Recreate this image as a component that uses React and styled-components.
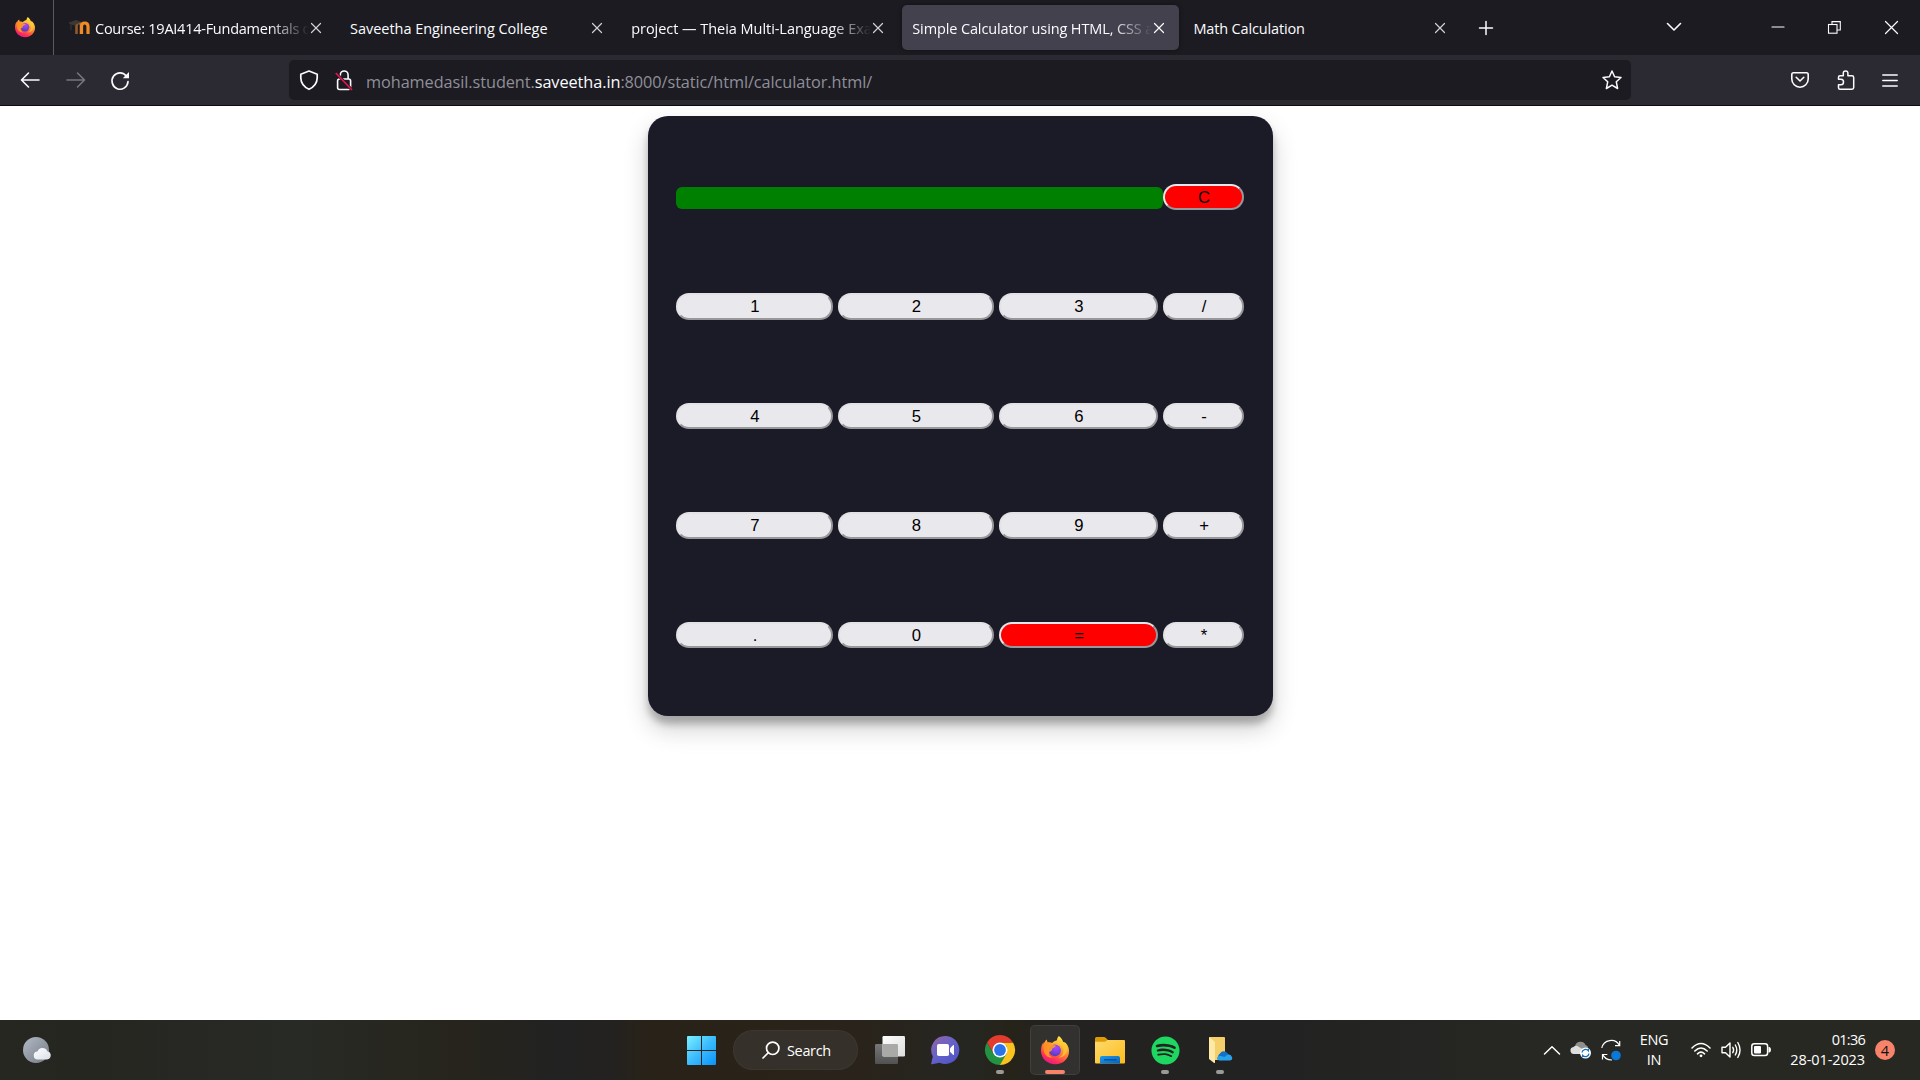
import React from "react";
import styled, { createGlobalStyle } from "styled-components";
import { FaSpotify } from "react-icons/fa";

const GlobalStyle = createGlobalStyle`
  * { box-sizing: border-box; }
  body { margin: 0; background: #fff; overflow: hidden; }
  svg { display: block; flex: none; overflow: visible; }
`;

const Screen = styled.div`
  display: grid;
  grid-template-rows: 55px 51px 914px 60px;
  width: 1920px;
  height: 1080px;
  font-family: "Open Sans", "Noto Sans", sans-serif;
  color: #fbfbfe;
`;

/* ---------- Browser chrome ---------- */

const TabStrip = styled.header`
  display: flex;
  align-items: center;
  background: #1c1b22;
`;

const PinnedSlot = styled.div`
  display: flex;
  align-items: center;
  justify-content: center;
  width: 54px;
  height: 55px;
  padding: 0 3px 1px 0;
  border-right: 1px solid #5b5a62;
`;

const Tabs = styled.nav`
  display: grid;
  grid-template-columns: repeat(5, 277px);
  column-gap: 4.1px;
  margin-left: 5px;
`;

const Tab = styled.div`
  display: flex;
  align-items: center;
  height: 45px;
  padding: 0 15px 0 10px;
  border-radius: 5px;
  background: ${(p) => (p.$active ? "#42414d" : "transparent")};
  box-shadow: ${(p) => (p.$active ? "0 0 4px rgba(0, 0, 0, 0.45)" : "none")};
`;

const TabTitle = styled.span`
  flex: 1;
  min-width: 0;
  white-space: nowrap;
  font-size: 14.5px;
  line-height: 24px;
  padding-top: 2px;
  letter-spacing: ${(p) => p.$tracking || -0.04}px;
  mask-image: ${(p) => (p.$fade ? "linear-gradient(to left, transparent 2px, #000 42px)" : "none")};
`;

const Favicon = styled.span`
  display: flex;
  margin-right: 5px;
`;

const NewTab = styled.span`
  display: flex;
  margin-left: 19px;
`;

const WindowControls = styled.div`
  display: flex;
  align-items: center;
  gap: 44px;
  margin-left: auto;
  padding: 0 22px 1px 0;
`;

const ListTabs = styled.span`
  display: flex;
  margin-right: 47px;
`;

const NavBar = styled.div`
  display: flex;
  align-items: center;
  background: #2b2a33;
  border-bottom: 1px solid #0c0c0d;
`;

const NavButtons = styled.div`
  display: flex;
  align-items: center;
  gap: 25.5px;
  width: 289px;
  padding-left: 20px;
`;

const UrlBar = styled.div`
  display: flex;
  align-items: center;
  width: 1342px;
  height: 40px;
  padding: 0 9px 0 10px;
  border-radius: 5px;
  background: #1c1b22;
`;

const UrlIcons = styled.div`
  display: flex;
  gap: 16px;
  margin-right: 13px;
`;

const Address = styled.span`
  flex: 1;
  padding-top: 3px;
  font-size: 16.3px;
  line-height: 26px;
  letter-spacing: -0.07px;
  color: #8f8f98;
`;

const Host = styled.span`
  color: #fbfbfe;
`;

const ToolbarActions = styled.div`
  display: flex;
  align-items: center;
  gap: 27.5px;
  margin-left: auto;
  padding-right: 22px;
`;

/* ---------- Calculator page ---------- */

const Page = styled.main`
  display: flex;
  justify-content: center;
  align-items: flex-start;
  padding-top: 10px;
  background: #fff;
`;

const Calculator = styled.section`
  display: grid;
  grid-template-columns: 157px 156px 159px 81px;
  grid-template-rows: repeat(5, 109.5px);
  column-gap: 5px;
  align-items: center;
  width: 625px;
  height: 600px;
  padding: 26px 28px;
  border-radius: 20px;
  background: #1a1b27;
  box-shadow: 0 12.5px 25px rgba(0, 0, 0, 0.19), 0 7.5px 7.5px rgba(0, 0, 0, 0.23);
`;

const Display = styled.div`
  grid-column: span 3;
  height: 22px;
  margin: 2px -5px 0 0;
  border-radius: 6px;
  background: #008000;
`;

const Key = styled.button`
  height: ${(p) => (p.$tall ? 27 : 26)}px;
  width: 100%;
  padding: 2px 0 0 2px;
  border: 2px solid;
  border-color: ${(p) => (p.$accent ? "#e9e9ed #98989c #98989c #e9e9ed" : "#e3e3e5 #98989a #98989a #e3e3e5")};
  border-radius: 13px;
  background: ${(p) => (p.$accent ? "#ff0000" : "#e9e9ed")};
  color: #000;
  font: 16.7px/20px "Liberation Sans", Arial, sans-serif;
`;

/* ---------- Taskbar ---------- */

const Taskbar = styled.footer`
  display: grid;
  grid-template-columns: 676px 569px 1fr;
  align-items: center;
  background: linear-gradient(
    90deg,
    #272722 0,
    #262621 90px,
    #282a25 300px,
    #27261f 410px,
    #26241c 460px,
    #222222 560px,
    #232220 610px,
    #292218 650px,
    #29231b 860px,
    #252621 970px,
    #262319 1010px,
    #232220 1050px,
    #222222 1280px,
    #272723 1540px,
    #282823 1920px
  );
`;

const Weather = styled.div`
  padding-left: 22px;
`;

const Apps = styled.div`
  display: flex;
  align-items: center;
  gap: 5px;
`;

const AppSlot = styled.div`
  position: relative;
  display: flex;
  align-items: center;
  justify-content: center;
  width: 50px;
  height: 50px;
  border-radius: 5px;
  background: ${(p) => (p.$active ? "rgba(255, 255, 255, 0.07)" : "transparent")};
  box-shadow: ${(p) => (p.$active ? "inset 0 0 0 1px rgba(255, 255, 255, 0.07)" : "none")};
`;

const Indicator = styled.i`
  position: absolute;
  bottom: 1px;
  left: 50%;
  width: ${(p) => (p.$active ? 20 : 8)}px;
  height: 4px;
  border-radius: 2px;
  transform: translateX(-50%);
  background: ${(p) => (p.$active ? "#f7846a" : "#9a9a98")};
`;

const SearchPill = styled.div`
  display: flex;
  align-items: center;
  gap: 7px;
  width: 125px;
  height: 40px;
  margin: 0 2px;
  padding-left: 29px;
  border-radius: 20px;
  background: #353029;
  box-shadow: inset 0 0 0 1px #3b362f;
  font-size: 14.5px;
  letter-spacing: -0.35px;
  color: #fff;
`;

const Tray = styled.div`
  display: flex;
  align-items: center;
  justify-content: flex-end;
  padding-right: 25px;
  font-size: 14.5px;
  line-height: 20px;
  color: #fff;
`;

const TrayIcons = styled.div`
  display: flex;
  align-items: center;
  gap: 10px;
`;

const Language = styled.div`
  width: 30px;
  margin: 0 22px 0 18px;
  text-align: center;
  letter-spacing: -0.3px;
`;

const Clock = styled.div`
  width: 80px;
  margin: 0 10px 0 14px;
  text-align: right;
  letter-spacing: -0.1px;
`;

const Time = styled.div`
  letter-spacing: -0.75px;
`;

const Badge = styled.div`
  width: 20px;
  height: 20px;
  border-radius: 50%;
  background: #f7846a;
  color: #111;
  font-size: 14.5px;
  line-height: 21px;
  text-align: center;
`;

/* ---------- Icons ---------- */

const Line = ({ w, h, d, sw = 1.6, color = "#fbfbfe", fill = "none", children }) => (
  <svg width={w} height={h} viewBox={`0 0 ${w} ${h}`} fill={fill} stroke={color} strokeWidth={sw} strokeLinecap="round" strokeLinejoin="round">
    <path d={d} />
    {children}
  </svg>
);

const Close = ({ size = 10, color = "#d2d2d6" }) => (
  <Line w={size} h={size} sw={1.2} color={color} d={`M.5 .5L${size - 0.5} ${size - 0.5}M${size - 0.5} .5L.5 ${size - 0.5}`} />
);

const FirefoxIcon = ({ size, id }) => (
  <svg width={size} height={size} viewBox="0 0 28 28">
    <defs>
      <linearGradient id={`${id}-body`} x1=".8" y1="0" x2=".3" y2="1">
        <stop offset="0" stopColor="#fff44f" />
        <stop offset=".3" stopColor="#ffb932" />
        <stop offset=".58" stopColor="#ff7139" />
        <stop offset=".8" stopColor="#ff3355" />
        <stop offset="1" stopColor="#e31587" />
      </linearGradient>
      <radialGradient id={`${id}-globe`} cx=".6" cy=".25" r=".8">
        <stop offset="0" stopColor="#b044f5" />
        <stop offset=".55" stopColor="#7542e5" />
        <stop offset="1" stopColor="#4a3fa8" />
      </radialGradient>
      <linearGradient id={`${id}-head`} x1="0" y1="0" x2="1" y2="1">
        <stop offset="0" stopColor="#ff8a16" />
        <stop offset="1" stopColor="#ffb52e" />
      </linearGradient>
    </defs>
    <path fill={`url(#${id}-body)`} d="M17.8 0c2.4 1.5 3.6 3.7 4.4 6 1-.1 2.2.6 2.8 1.3 2 2.3 3 4.9 3 7.9C28 22.500 22.100 28.300 14.300 28.300 6.300 28.300 0 22.300 0 14.700c0-3.600 1-6.400 2.400-8.400L2.700 8.200C3.200 6.100 4.400 4.400 6 3.500c-.1 1.200.1 2.200.9 3 1.500-.3 3-.1 4.200.6 1.300-1.700 3.100-2.500 4.900-2.900C16 2.600 16.700 1.200 17.800 0Z" />
    <circle cx="14" cy="14.300" r="5.900" fill={`url(#${id}-globe)`} />
    <path fill={`url(#${id}-head)`} d="M2.600 8.800C4 6.800 6.500 6.100 8.800 6.900c1.100.4 1.800 1.200 2.500 2.200l3.600.3c0 1.600-2.500 2.300-3.400 3.200-.5.600-.2 1.500-1 2.100-.8.700-1.900.7-2.600 1.500-.5 2.700 1.500 4.600 4.200 5.200-4.600 1-8.800-2.200-9.300-6.600-.3-2.300-.4-4.200-.2-6Z" opacity=".85" />
    <path fill="#ffca35" opacity=".75" d="M17.500 7.200c3.800 2 5.600 5 4.900 8.700-.5 2.700-2.400 4.800-5 5.700 4.800.1 8.200-3.200 8.500-7.600.2-3.400-1.500-5.900-4.100-7.600L18 3.200c-.9 1.400-1 2.700-.5 4Z" />
  </svg>
);

const MoodleIcon = () => (
  <svg width="21" height="17" viewBox="0 0 21 17" fill="none">
    <path d="M7.500 15V7Q7.500 4 9.700 4T12 7V15" stroke="#8f5a2c" strokeWidth="2.600" />
    <path d="M12.500 15V7.500Q12.500 4 15.700 4T19 7.500V15" stroke="#f08a24" strokeWidth="3.200" />
    <path d="M0 4L7 1.500l4 1.500-6 3ZM2 5v6" stroke="#3c3836" fill="#3c3836" />
  </svg>
);

const ReloadIcon = () => (
  <svg width="18" height="19" viewBox="0 0 18 19" fill="none" stroke="#fbfbfe" strokeWidth="1.700">
    <path d="M15.500 5.200A8 8.200 0 1 0 17 10.500" strokeLinecap="round" />
    <path d="M18 1V7.200H11.800Z" fill="#fbfbfe" stroke="none" />
  </svg>
);

const LockIcon = () => (
  <svg width="18" height="21" viewBox="0 0 18 21" fill="none" stroke="#fbfbfe" strokeWidth="1.600">
    <rect x="2.600" y="9" width="13" height="10.500" rx="2" />
    <path d="M5.300 9V5a3.900 4 0 0 1 7.800 0V9" />
    <path d="M.8 2.800L17 20" stroke="#1c1b22" strokeWidth="3" />
    <path d="M.8 3L17 20" stroke="#e8134b" strokeWidth="1.800" />
  </svg>
);

const RestoreIcon = () => (
  <svg width="13" height="13" viewBox="0 0 13 13" fill="none" stroke="#fbfbfe" strokeWidth="1.100">
    <rect x=".5" y="3.500" width="8.500" height="8.700" />
    <path d="M4 3.500V.6H12.300V9H9" />
  </svg>
);

const WeatherIcon = () => (
  <svg width="29" height="28" viewBox="0 0 29 28">
    <defs>
      <linearGradient id="moon" x1="0" y1="0" x2="1" y2="1"><stop stopColor="#b2bac5" /><stop offset="1" stopColor="#747b85" /></linearGradient>
      <linearGradient id="cloud" x1="0" y1="0" x2="1" y2="1"><stop stopColor="#fff" /><stop offset="1" stopColor="#d9e0e8" /></linearGradient>
    </defs>
    <circle cx="14" cy="14" r="13" fill="url(#moon)" />
    <path fill="url(#cloud)" d="M16 23.500a4 4 0 0 1-.5-8 5.200 5.200 0 0 1 9.800-.3A4.200 4.200 0 0 1 25 23.500Z" />
  </svg>
);

const WindowsIcon = () => (
  <svg width="29" height="29" viewBox="0 0 29 29">
    <defs><linearGradient id="win" gradientUnits="userSpaceOnUse" x1="0" y1="0" x2="29" y2="29"><stop stopColor="#7af0ff" /><stop offset=".5" stopColor="#3cbcff" /><stop offset="1" stopColor="#0a93f7" /></linearGradient></defs>
    <path fill="url(#win)" d="M0 1Q0 0 1 0H14V14H0ZM15 0H28Q29 0 29 1V14H15ZM0 15H14V29H1Q0 29 0 28ZM15 15H29V28Q29 29 28 29H15Z" />
  </svg>
);

const TaskViewIcon = () => (
  <svg width="30" height="28" viewBox="0 0 30 28">
    <defs>
      <linearGradient id="tv1" x1="0" y1="0" x2="1" y2="1"><stop stopColor="#fff" /><stop offset="1" stopColor="#dcdcdc" /></linearGradient>
      <linearGradient id="tv2" x1="0" y1="0" x2="0" y2="1"><stop stopColor="#777" /><stop offset="1" stopColor="#515151" /></linearGradient>
    </defs>
    <rect y="8" width="23" height="20" rx="1.300" fill="url(#tv2)" />
    <rect x="7.500" y="0" width="22.500" height="20.500" rx="1.300" fill="url(#tv1)" />
    <path d="M7.500 8H21.700Q23 8 23 9.300V20.500H8.500Q7.500 20.500 7.500 19.500Z" fill="#a9a9a8" />
  </svg>
);

const ChatIcon = () => (
  <svg width="29" height="29" viewBox="0 0 29 29">
    <defs><linearGradient id="chat" x1="0" y1="0" x2=".8" y2="1"><stop offset=".1" stopColor="#8d62aa" /><stop offset=".5" stopColor="#6663c7" /><stop offset="1" stopColor="#5152c8" /></linearGradient></defs>
    <path fill="url(#chat)" d="M15 0a14 14 0 1 1-6.300 26.800L1 28.300Q0 28.500.2 27.500L1.800 20.500A14 14 0 0 1 15 0Z" />
    <rect x="6" y="8" width="12" height="12" rx="1.800" fill="#fff" />
    <path d="M19 12.200L22 9.300Q23 8.700 23 9.800V18.200Q23 19.300 22 18.700L19 15.800Z" fill="#fff" />
  </svg>
);

const ChromeIcon = () => (
  <svg width="30" height="30" viewBox="0 0 30 30">
    <path fill="#fcc31e" d="M28 7.500A15 15 0 0 1 15 30L14 26 21.500 18.700 21.500 11L15 7.500Z" />
    <path fill="#229342" d="M2 7.500A15 15 0 0 0 15 30L21.500 18.700 15 22 8.500 18.700Z" />
    <path fill="#e33b2e" d="M15 7.500H28A15 15 0 0 0 2 7.500L8.500 18.500Z" />
    <circle cx="15" cy="15" r="7.500" fill="#fff" />
    <circle cx="15" cy="15" r="5.900" fill="#2a73eb" />
  </svg>
);

const ExplorerIcon = () => (
  <svg width="30" height="27" viewBox="0 0 30 27">
    <defs>
      <linearGradient id="fold" x1="0" y1="0" x2="1" y2="1"><stop stopColor="#ffda6d" /><stop offset="1" stopColor="#fcbc1c" /></linearGradient>
      <linearGradient id="fblue" x1="0" y1="0" x2="1" y2="1"><stop stopColor="#1a9bec" /><stop offset="1" stopColor="#0962bc" /></linearGradient>
    </defs>
    <path fill="#dc9a04" d="M0 1.500Q0 0 1.500 0H9Q10 0 10.700.8L13 3V8H0Z" />
    <path fill="url(#fold)" d="M0 4.700H9.500Q10.500 4.700 11.200 4L12.300 3H29Q30 3 30 4V25.500Q30 26.500 29 26.500H1Q0 26.500 0 25.500Z" />
    <path fill="url(#fblue)" d="M5 26.500V21Q5 19 7 19H23Q25 19 25 21V26.500Z" />
    <path stroke="#064b93" strokeWidth="1.300" d="M9 22.800H21.500" />
  </svg>
);

const CloudFolderIcon = () => (
  <svg width="26" height="28" viewBox="0 0 26 28">
    <path fill="#f5cf69" d="M2 1H17Q18 1 18 2V24H6Z" />
    <path fill="#ffe9a6" d="M2 1.200L7 5Q8 6 8 7V26.500Q7.500 27.500 6.500 26.500L2 23Z" />
    <path fill="#1173c7" d="M11 21a4 4 0 0 1 2-3.500 4.500 4.500 0 0 1 7.500-.3L23 20 14 24.500Z" />
    <path fill="#28a2ec" d="M12.500 24.500Q9.500 24 10 21.800 11 19.500 14 20L17.500 21 20 18.900Q23.500 17.800 25 21 26 24 23 24.500Z" />
  </svg>
);

const CloudSyncIcon = () => (
  <svg width="20" height="18" viewBox="0 0 20 18" fill="none">
    <path fill="#8f8f8d" d="M4 5.500A5.500 5.500 0 0 1 14.500 4Q18 5 17 9L8 11Z" />
    <path fill="#dededc" d="M3.500 13A3.500 3.500 0 0 1 2.500 6Q5 3.500 8 6L13 9V13Z" />
    <circle cx="14.500" cy="12" r="5.500" fill="#fff" />
    <path stroke="#0a70ca" strokeWidth="1.300" d="M11 11.500a3.600 3.600 0 0 1 6.300-1.800V8M18 12.600a3.600 3.600 0 0 1-6.300 1.800V16" />
  </svg>
);

const UpdateIcon = () => (
  <svg width="20" height="21" viewBox="0 0 20 21" fill="none" stroke="#fff" strokeWidth="1.200">
    <path d="M.8 8A9.500 9.500 0 0 1 18.500 5.500M18.700 1V5.700H14M11 20Q4 20 1.800 14.500M1.500 19.500V14.500H6.300" />
    <circle cx="15" cy="15.500" r="4.800" fill="#0a78d7" stroke="none" />
  </svg>
);

const WifiIcon = () => (
  <Line w={20} h={16} sw={1.600} color="#fff" d="M1 6Q10-3 19 6M3.800 9Q10 3 16.200 9M6.500 11.800Q10 8.500 13.500 11.800">
    <circle cx="10" cy="13.800" r="1.400" fill="#fff" stroke="none" />
  </Line>
);

const SpeakerIcon = () => (
  <Line w={20} h={18} sw={1.400} color="#fff" d="M1 6.200H4.500L9 2V16L4.500 11.800H1ZM11.800 6.300Q13.500 9 11.800 11.700M14.300 4Q17.300 9 14.300 14M16.800 1.500Q21.300 9 16.800 16.500" />
);

const BatteryIcon = () => (
  <svg width="20" height="14" viewBox="0 0 20 14" fill="none">
    <rect x=".8" y=".8" width="15.800" height="11.800" rx="2.500" stroke="#fff" strokeWidth="1.500" />
    <rect x="3" y="3" width="7" height="7.500" rx="1" fill="#fff" />
    <path fill="#fff" d="M17.500 4H18.500Q20 4.500 20 6.700T18.500 9.500H17.500Z" />
  </svg>
);

/* ---------- Data ---------- */

const tabs = [
  { title: "Course: 19AI414-Fundamentals o", moodle: true, fade: true, tracking: -0.25 },
  { title: "Saveetha Engineering College" },
  { title: "project — Theia Multi-Language Exa", fade: true },
  { title: "Simple Calculator using HTML, CSS a", fade: true, active: true, tracking: -0.12 },
  { title: "Math Calculation", tracking: -0.15 },
];

const keys = ["1", "2", "3", "/", "4", "5", "6", "-", "7", "8", "9", "+", ".", "0", "=", "*"];

const apps = [
  { icon: <TaskViewIcon /> },
  { icon: <ChatIcon /> },
  { icon: <ChromeIcon />, running: true },
  { icon: <FirefoxIcon size={28} id="ff-task" />, running: true, active: true },
  { icon: <ExplorerIcon /> },
  { icon: <FaSpotify size={29} color="#1ed760" />, running: true },
  { icon: <CloudFolderIcon />, running: true },
];

export default function App() {
  return (
    <Screen>
      <GlobalStyle />
      <TabStrip>
        <PinnedSlot><FirefoxIcon size={20} id="ff-tab" /></PinnedSlot>
        <Tabs>
          {tabs.map((t) => (
            <Tab key={t.title} $active={t.active}>
              {t.moodle && <Favicon><MoodleIcon /></Favicon>}
              <TabTitle $fade={t.fade} $tracking={t.tracking}>{t.title}</TabTitle>
              <Close color={t.active ? "#fbfbfe" : undefined} />
            </Tab>
          ))}
        </Tabs>
        <NewTab><Line w={14} h={14} sw={1.500} d="M7 .5V13.500M.5 7H13.500" /></NewTab>
        <WindowControls>
          <ListTabs><Line w={14} h={8} d="M.5 .5L7 7L13.500 .5" /></ListTabs>
          <Line w={12} h={2} sw={1.200} d="M0 1H12" />
          <RestoreIcon />
          <Close size={13} color="#fbfbfe" />
        </WindowControls>
      </TabStrip>

      <NavBar>
        <NavButtons>
          <Line w={20} h={16} d="M19 8H2M8.500 1L1.500 8L8.500 15" />
          <Line w={20} h={16} color="#76757e" d="M1 8H18M11.500 1L18.500 8L11.500 15" />
          <ReloadIcon />
        </NavButtons>
        <UrlBar>
          <UrlIcons>
            <Line w={20} h={20} sw={1.700} d="M10 1L18.200 4.200V8Q18 15.500 10 19.300Q2 15.500 1.800 8V4.200Z" />
            <LockIcon />
          </UrlIcons>
          <Address>mohamedasil.student.<Host>saveetha.in</Host>:8000/static/html/calculator.html/</Address>
          <Line w={20} h={20} sw={1.500} d="M10 1L12.600 6.800L19 7.500L14.300 11.800L15.600 18.500L10 15.200L4.400 18.500L5.700 11.800L1 7.500L7.400 6.800Z" />
        </UrlBar>
        <ToolbarActions>
          <Line w={18} h={16} d="M2.500 .8H15.500Q17.200 .8 17.200 2.500V7A8.200 8.200 0 0 1 .8 7V2.500Q.8 .8 2.500 .8ZM5.200 5.300L9 9L12.800 5.300" />
          <Line w={18} h={20} sw={1.500} d="M1.500 9V7.300Q1.500 5.800 3 5.800H6.300V3.200Q6.300 1 8.600 1T10.900 3.200V5.800H15Q16.700 5.800 16.700 7.500V17.500Q16.700 19.200 15 19.200H3Q1.500 19.200 1.500 17.700V14.800H4Q6.500 14.800 6.500 12T4 9.200H1.500" />
          <Line w={16} h={13} sw={1.500} d="M.8 1H15.200M.8 6.500H15.200M.8 12H15.200" />
        </ToolbarActions>
      </NavBar>

      <Page>
        <Calculator>
          <Display />
          <Key $accent>C</Key>
          {keys.map((k, i) => (
            <Key key={k} $accent={k === "="} $tall={Math.floor(i / 4) % 2 === 0}>{k}</Key>
          ))}
        </Calculator>
      </Page>

      <Taskbar>
        <Weather><WeatherIcon /></Weather>
        <Apps>
          <AppSlot><WindowsIcon /></AppSlot>
          <SearchPill>
            <Line w={18} h={18} sw={1.700} color="#fff" d="M1 17L6 12"><circle cx="10.700" cy="7.300" r="6.200" /></Line>
            Search
          </SearchPill>
          {apps.map((a, i) => (
            <AppSlot key={i} $active={a.active}>
              {a.icon}
              {a.running && <Indicator $active={a.active} />}
            </AppSlot>
          ))}
        </Apps>
        <Tray>
          <TrayIcons>
            <Line w={18} h={9} sw={1.500} color="#fff" d="M1.500 8L9 .8L16.500 8" />
            <CloudSyncIcon />
            <UpdateIcon />
          </TrayIcons>
          <Language>ENG<br />IN</Language>
          <TrayIcons>
            <WifiIcon />
            <SpeakerIcon />
            <BatteryIcon />
          </TrayIcons>
          <Clock><Time>01:36</Time>28-01-2023</Clock>
          <Badge>4</Badge>
        </Tray>
      </Taskbar>
    </Screen>
  );
}
